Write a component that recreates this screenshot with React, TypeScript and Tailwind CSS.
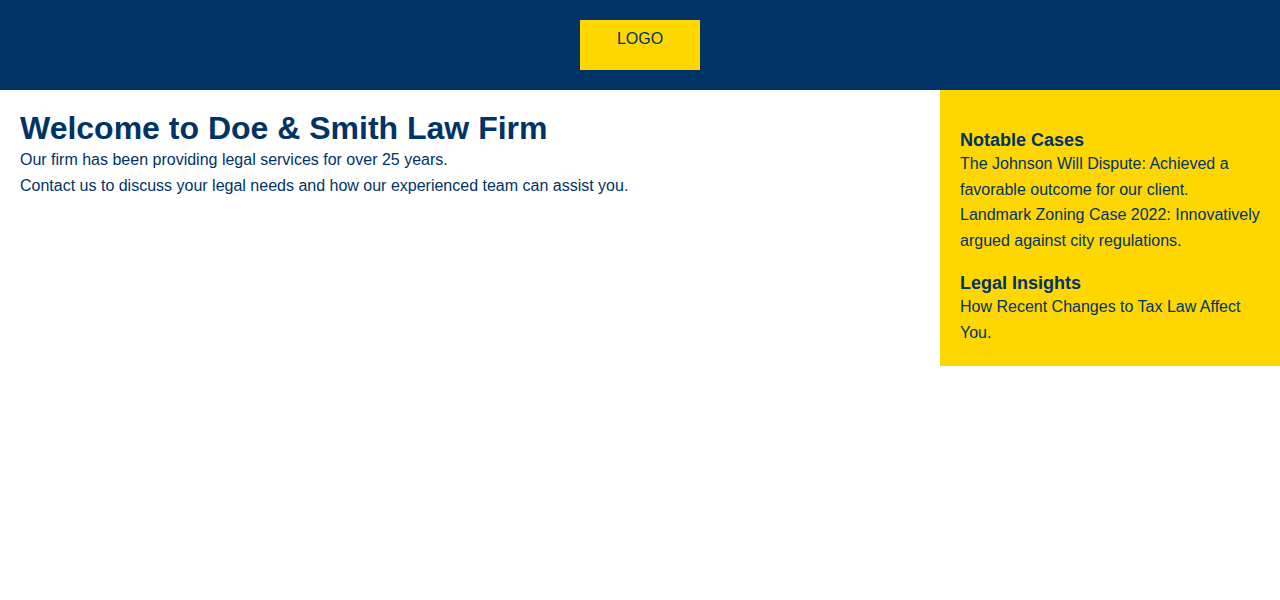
export default function App() {
  return (
    <div className="min-h-[600px] bg-white text-[#003366] text-[16px] leading-[1.6]" style={{ fontFamily: '"Liberation Sans", Arial, sans-serif' }}>
      <header className="flex h-[90px] items-start justify-center bg-[#003366] pt-[20px]">
        <div className="h-[50px] w-[120px] bg-[#FFD700] pt-[10px] text-center leading-[normal] text-[#003366]">LOGO</div>
      </header>
      <div className="flex items-start">
        <main className="flex-1 p-[20px]">
          <h1 className="m-0 text-[32px] font-bold leading-[normal]">Welcome to Doe &amp; Smith Law Firm</h1>
          <p className="m-0">Our firm has been providing legal services for over 25 years.</p>
          <p className="m-0">Contact us to discuss your legal needs and how our experienced team can assist you.</p>
        </main>
        <aside className="w-[340px] bg-[#FFD700] p-[20px]">
          <section>
            <h3 className="mt-[20px] text-[18px] font-bold leading-[normal]">Notable Cases</h3>
            <p className="m-0">The Johnson Will Dispute: Achieved a favorable outcome for our client.</p>
            <p className="m-0">Landmark Zoning Case 2022: Innovatively argued against city regulations.</p>
          </section>
          <section>
            <h3 className="mt-[20px] text-[18px] font-bold leading-[normal]">Legal Insights</h3>
            <p className="m-0">How Recent Changes to Tax Law Affect You.</p>
          </section>
        </aside>
      </div>
    </div>
  );
}
